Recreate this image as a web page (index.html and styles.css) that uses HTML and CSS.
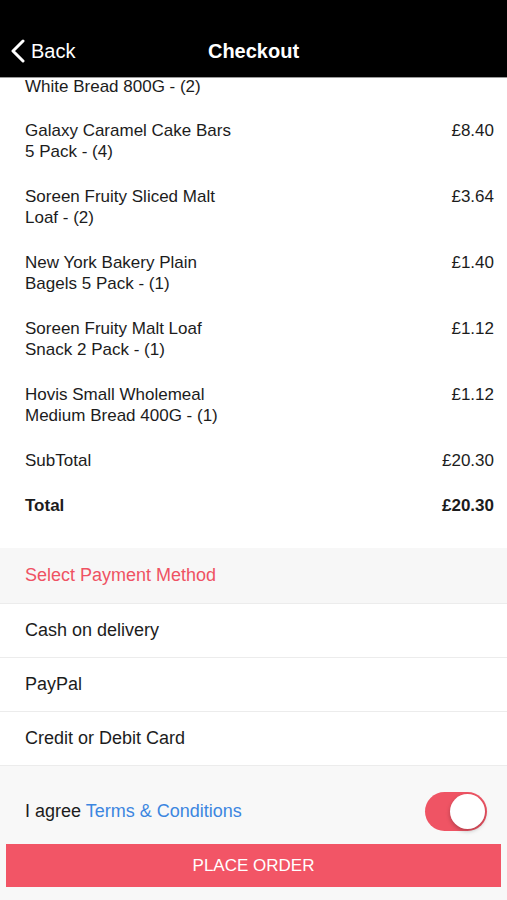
FILE: index.html
```html
<!DOCTYPE html>
<html lang="en">
<head>
  <meta charset="UTF-8">
  <meta name="viewport" content="width=device-width, initial-scale=1.0">
  <title>Checkout</title>
  <link rel="stylesheet" href="styles.css">
</head>
<body>
  <div class="screen">
    <div class="nav-bar">
      <div class="back">
        <svg class="chevron" width="16" height="24" viewBox="0 0 16 24">
          <polyline points="13,2 3,12 13,22" fill="none" stroke="#fff" stroke-width="3" stroke-linecap="round" stroke-linejoin="round"/>
        </svg>
        <span>Back</span>
      </div>
      <h1 class="title">Checkout</h1>
    </div>

    <div class="scroll">
      <div class="order-list">
        <!-- list is scrolled: only the tail of the first item shows -->
        <div class="order-row scrolled">
          <span class="name">White Bread 800G - (2)</span>
        </div>
        <div class="order-row">
          <span class="name">Galaxy Caramel Cake Bars 5 Pack - (4)</span>
          <span class="price">£8.40</span>
        </div>
        <div class="order-row">
          <span class="name">Soreen Fruity Sliced Malt Loaf - (2)</span>
          <span class="price">£3.64</span>
        </div>
        <div class="order-row">
          <span class="name">New York Bakery Plain Bagels 5 Pack - (1)</span>
          <span class="price">£1.40</span>
        </div>
        <div class="order-row">
          <span class="name">Soreen Fruity Malt Loaf Snack 2 Pack - (1)</span>
          <span class="price">£1.12</span>
        </div>
        <div class="order-row">
          <span class="name">Hovis Small Wholemeal Medium Bread 400G - (1)</span>
          <span class="price">£1.12</span>
        </div>
        <div class="order-row">
          <span class="name">SubTotal</span>
          <span class="price">£20.30</span>
        </div>
        <div class="order-row total">
          <span class="name">Total</span>
          <span class="price">£20.30</span>
        </div>
      </div>

      <div class="payment">
        <div class="payment-header">Select Payment Method</div>
        <div class="payment-option">Cash on delivery</div>
        <div class="payment-option">PayPal</div>
        <div class="payment-option">Credit or Debit Card</div>
      </div>

      <div class="footer">
        <div class="agree">
          <span>I agree <a href="#" class="terms">Terms &amp; Conditions</a></span>
          <div class="toggle"><div class="knob"></div></div>
        </div>
        <button class="place-order">PLACE ORDER</button>
      </div>
    </div>
  </div>
</body>
</html>
```

FILE: styles.css
```css
body {
  margin: 0;
  font-family: "Liberation Sans", Arial, sans-serif;
  color: #1c1c1c;
  background-color: #f8f8f8;
}
.screen {
  width: 507px;
  height: 900px;
  overflow: hidden;
  display: flex;
  flex-direction: column;
}
.nav-bar {
  position: relative;
  height: 78px;
  box-sizing: border-box;
  padding-top: 24px;
  background-color: #000;
  border-bottom: 1px solid #9a9a9a;
  display: flex;
  align-items: center;
  justify-content: center;
  flex-shrink: 0;
}
.back {
  position: absolute;
  left: 10px;
  top: 39px;
  display: flex;
  align-items: center;
  gap: 5px;
  color: #fff;
  font-size: 20px;
}
.title {
  margin: 0;
  color: #fff;
  font-size: 20px;
  font-weight: bold;
  line-height: 54px;
}
.scroll {
  flex: 1;
  overflow: hidden;
  display: flex;
  flex-direction: column;
}
.order-list {
  background-color: #fff;
  padding: 0 13px 20px 25px;
}
.order-row {
  display: flex;
  justify-content: space-between;
  align-items: flex-start;
  padding: 12px 0;
  font-size: 17px;
  line-height: 21px;
}
.order-row.scrolled {
  padding: 0 0 13px;
  line-height: 17px;
}
.order-row .name {
  width: 212px;
}
.order-row.scrolled .name {
  width: auto;
}
.total {
  font-weight: bold;
}
.payment {
  background-color: #fff;
}
.payment-header {
  background-color: #f7f7f7;
  color: #ef5263;
  font-size: 18px;
  height: 55px;
  line-height: 55px;
  padding-left: 25px;
  border-bottom: 1px solid #ececec;
}
.payment-option {
  font-size: 18px;
  height: 53px;
  line-height: 53px;
  padding-left: 25px;
  border-bottom: 1px solid #ececec;
}
.footer {
  flex: 1;
  background-color: #f8f8f8;
  padding: 0 6px;
}
.agree {
  display: flex;
  justify-content: space-between;
  align-items: center;
  height: 78px;
  box-sizing: border-box;
  padding: 12px 14px 0 19px;
  font-size: 18px;
}
.terms {
  color: #3c86e0;
  text-decoration: none;
}
.toggle {
  width: 62px;
  height: 39px;
  border-radius: 20px;
  background-color: #ef5464;
  display: flex;
  align-items: center;
  justify-content: flex-end;
  padding-right: 2px;
  box-sizing: border-box;
}
.knob {
  width: 35px;
  height: 35px;
  border-radius: 50%;
  background-color: #fff;
  box-shadow: 0 2px 4px rgba(0, 0, 0, 0.25);
}
.place-order {
  display: block;
  width: 100%;
  height: 43px;
  border: none;
  background-color: #f25566;
  color: #fff;
  font-family: "Liberation Sans", Arial, sans-serif;
  font-size: 17px;
  cursor: pointer;
}
```
